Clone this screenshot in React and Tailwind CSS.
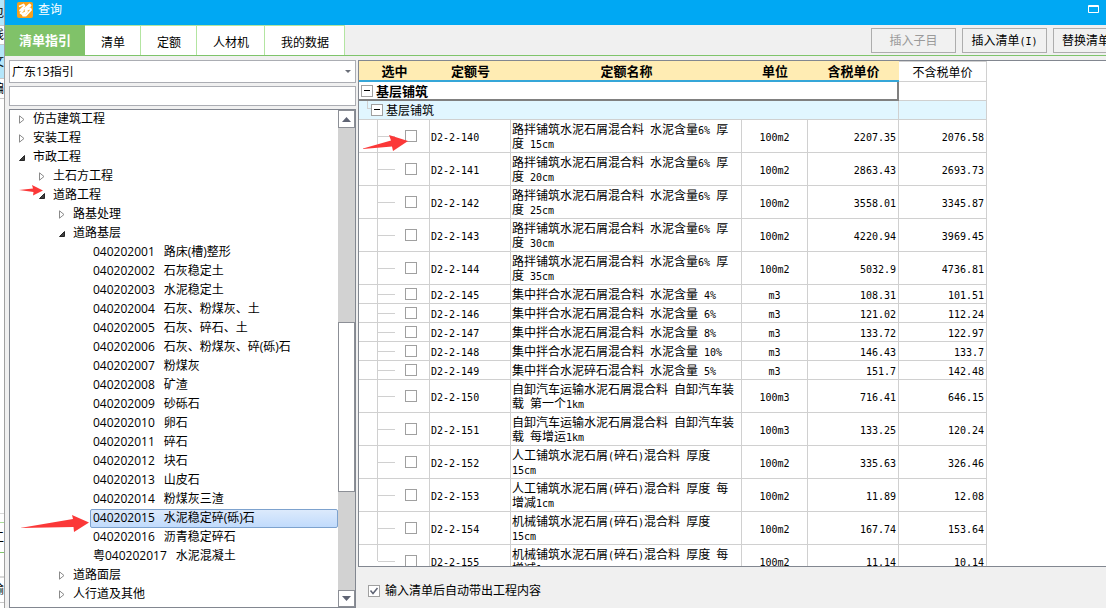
import { useState } from 'react';

const tabs = ['清单', '定额', '人材机', '我的数据'];

const tree = [
  { level: 0, label: '仿古建筑工程', state: 'closed' },
  { level: 0, label: '安装工程', state: 'closed' },
  { level: 0, label: '市政工程', state: 'open' },
  { level: 1, label: '土石方工程', state: 'closed' },
  { level: 1, label: '道路工程', state: 'open', arrow: 'short' },
  { level: 2, label: '路基处理', state: 'closed' },
  { level: 2, label: '道路基层', state: 'open' },
  { level: 3, code: '040202001', label: '路床(槽)整形' },
  { level: 3, code: '040202002', label: '石灰稳定土' },
  { level: 3, code: '040202003', label: '水泥稳定土' },
  { level: 3, code: '040202004', label: '石灰、粉煤灰、土' },
  { level: 3, code: '040202005', label: '石灰、碎石、土' },
  { level: 3, code: '040202006', label: '石灰、粉煤灰、碎(砾)石' },
  { level: 3, code: '040202007', label: '粉煤灰' },
  { level: 3, code: '040202008', label: '矿渣' },
  { level: 3, code: '040202009', label: '砂砾石' },
  { level: 3, code: '040202010', label: '卵石' },
  { level: 3, code: '040202011', label: '碎石' },
  { level: 3, code: '040202012', label: '块石' },
  { level: 3, code: '040202013', label: '山皮石' },
  { level: 3, code: '040202014', label: '粉煤灰三渣' },
  { level: 3, code: '040202015', label: '水泥稳定碎(砾)石', arrow: 'long' },
  { level: 3, code: '040202016', label: '沥青稳定碎石' },
  { level: 3, code: '粤040202017', label: '水泥混凝土' },
  { level: 2, label: '道路面层', state: 'closed' },
  { level: 2, label: '人行道及其他', state: 'closed' },
];

const indent = ['pl-0', 'pl-5', 'pl-10', 'pl-15'];

const rows = [
  { code: 'D2-2-140', name: ['路拌铺筑水泥石屑混合料 水泥含量6% 厚', '度 15cm'], unit: '100m2', price: '2207.35', net: '2076.58', arrow: true },
  { code: 'D2-2-141', name: ['路拌铺筑水泥石屑混合料 水泥含量6% 厚', '度 20cm'], unit: '100m2', price: '2863.43', net: '2693.73' },
  { code: 'D2-2-142', name: ['路拌铺筑水泥石屑混合料 水泥含量6% 厚', '度 25cm'], unit: '100m2', price: '3558.01', net: '3345.87' },
  { code: 'D2-2-143', name: ['路拌铺筑水泥石屑混合料 水泥含量6% 厚', '度 30cm'], unit: '100m2', price: '4220.94', net: '3969.45' },
  { code: 'D2-2-144', name: ['路拌铺筑水泥石屑混合料 水泥含量6% 厚', '度 35cm'], unit: '100m2', price: '5032.9', net: '4736.81' },
  { code: 'D2-2-145', name: ['集中拌合水泥石屑混合料 水泥含量 4%'], unit: 'm3', price: '108.31', net: '101.51' },
  { code: 'D2-2-146', name: ['集中拌合水泥石屑混合料 水泥含量 6%'], unit: 'm3', price: '121.02', net: '112.24' },
  { code: 'D2-2-147', name: ['集中拌合水泥石屑混合料 水泥含量 8%'], unit: 'm3', price: '133.72', net: '122.97' },
  { code: 'D2-2-148', name: ['集中拌合水泥石屑混合料 水泥含量 10%'], unit: 'm3', price: '146.43', net: '133.7' },
  { code: 'D2-2-149', name: ['集中拌合水泥碎石混合料 水泥含量 5%'], unit: 'm3', price: '151.7', net: '142.48' },
  { code: 'D2-2-150', name: ['自卸汽车运输水泥石屑混合料 自卸汽车装', '载 第一个1km'], unit: '100m3', price: '716.41', net: '646.15' },
  { code: 'D2-2-151', name: ['自卸汽车运输水泥石屑混合料 自卸汽车装', '载 每增运1km'], unit: '100m3', price: '133.25', net: '120.24' },
  { code: 'D2-2-152', name: ['人工铺筑水泥石屑(碎石)混合料 厚度', '15cm'], unit: '100m2', price: '335.63', net: '326.46' },
  { code: 'D2-2-153', name: ['人工铺筑水泥石屑(碎石)混合料 厚度 每', '增减1cm'], unit: '100m2', price: '11.89', net: '12.08' },
  { code: 'D2-2-154', name: ['机械铺筑水泥石屑(碎石)混合料 厚度', '15cm'], unit: '100m2', price: '167.74', net: '153.64' },
  { code: 'D2-2-155', name: ['机械铺筑水泥石屑(碎石)混合料 厚度 每', '增减1cm'], unit: '100m2', price: '11.14', net: '10.14' },
];

const mono = "font-['DejaVu_Sans_Mono','Noto_Sans_CJK_SC',monospace] text-[10px]";

// Latin runs are set in the mono face so they take half a CJK cell each
function Mixed({ text }) {
  return text.split(/([\x20-\x7e]+)/).map((part, i) =>
    i % 2 ? <span key={i} className={`${mono} whitespace-pre`}>{part}</span> : part
  );
}

function Logo() {
  return (
    <svg width="16" height="16" viewBox="0 0 16 16" aria-hidden="true">
      <rect width="16" height="16" rx="2" fill="#f9a01b" />
      <path d="M2 4.5 L6.5 2.5 L7.5 4 L3 8.5 L8 6.5 L12.5 2.5 L13.5 3.5 L8.5 8.5 L13.5 6.5 L14 8 L9 13.5 L6 13.5 L10 9.5 L5 12 L3.5 11 L6.5 8" fill="none" stroke="#fff" strokeWidth="1.8" strokeLinejoin="round" />
    </svg>
  );
}

function Twisty({ state }) {
  if (state === 'closed') {
    return (
      <svg width="6" height="9" viewBox="0 0 6 9" aria-hidden="true">
        <path d="M0.5 0.8 L5 4.5 L0.5 8.2 Z" fill="#fff" stroke="#8a8a8a" />
      </svg>
    );
  }
  if (state === 'open') {
    return (
      <svg width="6" height="6" viewBox="0 0 6 6" aria-hidden="true">
        <path d="M5.5 0.5 V5.5 H0.5 Z" fill="#404040" stroke="#262626" />
      </svg>
    );
  }
  return null;
}

function Minus() {
  return (
    <svg width="12" height="12" viewBox="0 0 12 12" className="shrink-0" aria-hidden="true">
      <rect x="0.5" y="0.5" width="11" height="11" fill="#fff" stroke="#a0a0a0" />
      <path d="M3 5.5 H9" stroke="#000" />
    </svg>
  );
}

function TreeRow({ item, selected, onSelect }) {
  return (
    <li className={`relative flex h-[19px] ${indent[item.level]}`}>
      <span className="flex w-5 shrink-0 items-center justify-center pl-1">
        <Twisty state={item.state} />
      </span>
      <button
        onClick={onSelect}
        className={`flex flex-1 items-center gap-[9px] rounded-xs border px-0.5 pb-0.5 text-left whitespace-nowrap ${
          selected ? 'border-[#7da2ce] bg-linear-to-b from-[#dceafc] to-[#c1dbfc]' : 'border-transparent'
        }`}
      >
        {item.code && <span>{item.code}</span>}
        <span>{item.label}</span>
      </button>
      {item.arrow === 'short' && (
        <svg className="absolute -top-1 left-2" width="26" height="14" viewBox="0 0 26 14" aria-hidden="true">
          <path d="M1 8 L15 6.5 L14 3 L25 8.5 L15 13.5 L15.5 10 Z" fill="#fb3838" />
        </svg>
      )}
      {item.arrow === 'long' && (
        <svg className="absolute top-1.5 left-2.5" width="70" height="18" viewBox="0 0 70 18" aria-hidden="true">
          <path d="M0 13 L53 4 L52 0 L69 7.5 L54 17 L53.5 12 Z" fill="#fb3838" />
        </svg>
      )}
    </li>
  );
}

function Tree() {
  const [selected, setSelected] = useState('水泥稳定碎(砾)石');

  return (
    <div className="flex min-h-0 flex-1 overflow-hidden border border-[#828790] bg-white">
      <ul className="min-w-0 flex-1 overflow-hidden">
        {tree.map((item) => (
          <TreeRow
            key={item.label}
            item={item}
            selected={item.label === selected}
            onSelect={() => setSelected(item.label)}
          />
        ))}
      </ul>
      <div className="flex w-[17px] flex-col bg-[#d2d2d2]">
        <button aria-label="向上" className="flex h-[18px] items-center justify-center border border-[#8c8f96] bg-white">
          <svg width="9" height="5" viewBox="0 0 9 5"><path d="M0 5 L4.5 0 L9 5 Z" fill="#5f6474" /></svg>
        </button>
        <div className="grow-[195]" />
        <div className="grow-[169] border border-[#8c8f96] bg-white" />
        <div className="grow-[98]" />
        <button aria-label="向下" className="flex h-[17px] items-center justify-center border border-[#8c8f96] bg-white">
          <svg width="9" height="5" viewBox="0 0 9 5"><path d="M0 0 L4.5 5 L9 0 Z" fill="#5f6474" /></svg>
        </button>
      </div>
    </div>
  );
}

function QuotaRow({ row, last }) {
  const height = row.name.length > 1 ? 'h-[33px]' : 'h-[19px]';
  const line = 'border-r border-b border-[#d0d0d0]';
  const value = `${line} ${mono} pt-1 pb-0`;

  return (
    <tr className={height}>
      <td className={`${line} p-0`}>
        <div className={`relative flex items-center ${row.name.length > 1 ? 'h-8' : 'h-[18px]'}`}>
          <span className={`ml-[18px] w-px bg-[#d0d0d0] ${last ? 'h-4 self-start' : 'h-full'}`} />
          <span className="h-px w-[17px] bg-[#d0d0d0]" />
          <input
            type="checkbox"
            aria-label={row.code}
            className="ml-2.5 size-3 appearance-none border border-[#a0a0a0] bg-white checked:bg-[#5f6474]"
          />
          {row.arrow && (
            <svg className="absolute top-3.5 left-1" width="46" height="18" viewBox="0 0 46 18" aria-hidden="true">
              <path d="M0 14.5 L28 6.5 L26 1 L45 7 L30 17 L29 12.5 L0 15 Z" fill="#fb3838" />
            </svg>
          )}
        </div>
      </td>
      <td className={`${value} pr-0 pl-px`}>{row.code}</td>
      <td className={`${line} pt-0.5 pr-0 pb-0 pl-px leading-[14px] whitespace-nowrap`}>
        {row.name.map((text) => (
          <div key={text} className="h-3.5"><Mixed text={text} /></div>
        ))}
      </td>
      <td className={`${value} px-0 text-center`}>{row.unit}</td>
      <td className={`${value} pr-0.5 pl-0 text-right`}>{row.price}</td>
      <td className={`${value} pr-0.5 pl-0 text-right`}>{row.net}</td>
    </tr>
  );
}

function QuotaTable() {
  const head = 'border-b-2 border-[#35a6d8] bg-[#ffecb3] px-0 pt-0.5 pb-0 text-[13px] font-bold';

  return (
    <div className="min-h-0 flex-1 overflow-hidden border-y border-l border-[#828790] bg-white">
      <table className="w-[628px] table-fixed border-separate border-spacing-0 leading-none">
        <colgroup>
          <col className="w-[71px]" />
          <col className="w-[81px]" />
          <col className="w-[231px]" />
          <col className="w-[66px]" />
          <col className="w-[91px]" />
          <col className="w-[88px]" />
        </colgroup>
        <thead>
          <tr className="h-[21px]">
            <th className={head}>选中</th>
            <th className={head}>定额号</th>
            <th className={head}>定额名称</th>
            <th className={head}>单位</th>
            <th className={head}>含税单价</th>
            <th className="border-t border-r border-b border-[#d0d0d0] px-0 pt-0.5 pb-0 font-normal">不含税单价</th>
          </tr>
        </thead>
        <tbody>
          <tr className="h-[19px]">
            <td colSpan={5} className="border-r-2 border-b-2 border-[#808080] p-0">
              <div className="flex items-center gap-[3px] pl-0.5 text-[13px] font-bold">
                <Minus />
                <span className="pt-0.5">基层铺筑</span>
              </div>
            </td>
            <td className="border-r border-b border-[#d0d0d0] p-0" />
          </tr>
          <tr className="h-[19px] bg-[#e1f6ff]">
            <td colSpan={5} className="border-r border-b border-[#d0d0d0] p-0">
              <div className="flex h-[18px] items-center pl-2">
                <span className="h-2 w-1 self-start border-b border-l border-[#d0d0d0]" />
                <Minus />
                <span className="pt-0.5 pl-[3px]">基层铺筑</span>
              </div>
            </td>
            <td className="border-r border-b border-[#d0d0d0] p-0" />
          </tr>
          {rows.map((row, i) => (
            <QuotaRow key={row.code} row={row} last={i === rows.length - 1} />
          ))}
        </tbody>
      </table>
    </div>
  );
}

// Sliver of the parent window that shows to the left of the dialog
function ParentEdge() {
  const cell = 'flex items-center justify-end overflow-hidden';

  return (
    <div className="flex w-[5px] shrink-0 flex-col border-r border-[#a0a0a0] bg-white" aria-hidden="true">
      <div className={`${cell} h-[26px] border-b border-[#c8c8c8] bg-[#b4e6fa]`}>包</div>
      <div className={`${cell} h-[19px] border-b border-[#c8c8c8]`}>线</div>
      <div className={`${cell} h-[34px] border-b border-[#c8c8c8] bg-[#b4e6fa]`}>文</div>
      <div className={`${cell} h-5 border-b border-[#c8c8c8]`}>编</div>
      <div className="flex-1 border-b border-[#d8d8d8]" />
      <div className="h-[9px] border-b border-[#a9dc98]" />
      <div className={`${cell} h-[30px] border-b border-[#7fc46b]`}>工</div>
      <div className="h-[25px] border-b-2 border-[#d8d8d8]" />
      <div className={`${cell} h-[25px] border-b border-[#c8c8c8]`}>输</div>
      <div className="h-[5px]" />
    </div>
  );
}

export default function App() {
  const toolButton = 'h-[25px] shrink-0 overflow-hidden border border-[#adadad] bg-[#f1f1f1] whitespace-nowrap';

  return (
    <div className="flex h-screen overflow-hidden bg-[#f0f0f0] font-['Open_Sans','Noto_Sans_CJK_SC',sans-serif] text-xs leading-none text-black">
      <ParentEdge />
      <div className="flex min-w-0 flex-1 flex-col">
        <header className="flex h-[25px] shrink-0 items-center bg-[#00a8f3] pr-[7px] pl-3 text-white">
          <div className="flex flex-1 items-center gap-[5px] pb-1.5">
            <Logo />
            <h1>查询</h1>
          </div>
          <button aria-label="最大化" className="pb-2">
            <svg width="11" height="8" viewBox="0 0 11 8">
              <path d="M0.5 0.5 H10.5 V7.5 H0.5 Z M0 1.5 H11" fill="none" stroke="#fff" />
            </svg>
          </button>
        </header>

        <div className="flex h-[31px] shrink-0 border-b border-[#7fc46b]">
          <nav className="flex">
            <button className="bg-[#80c269] px-3.5 text-[13px] font-bold text-white">清单指引</button>
            {tabs.map((tab) => (
              <button key={tab} className="border-t border-r border-[#b3e5a1] bg-white pt-1 pr-[15px] pl-4">
                {tab}
              </button>
            ))}
          </nav>
          <div className="flex flex-1 items-start justify-end gap-1.5 pt-[3px]">
            <button disabled className={`${toolButton} w-[85px] text-[#9a9a9a]`}>插入子目</button>
            <button className={`${toolButton} w-[85px]`}><Mixed text="插入清单(I)" /></button>
            <button className={`${toolButton} w-[53px] border-r-0 pl-2 text-left`}>替换清单</button>
          </div>
        </div>

        <div className="flex min-h-0 flex-1 gap-0.5 pt-1 pl-1">
          <aside className="flex w-[347px] shrink-0 flex-col gap-[3px]">
            <div className="relative">
              <select aria-label="指引" className="block h-[23px] w-full appearance-none border border-[#abadb3] bg-white px-0.5">
                <option>广东13指引</option>
              </select>
              <svg className="pointer-events-none absolute top-2.5 right-[5px]" width="6" height="3" viewBox="0 0 6 3" aria-hidden="true">
                <path d="M0 0 H6 L3 3 Z" fill="#6a6e78" />
              </svg>
            </div>
            <input type="text" aria-label="搜索" className="h-5 w-full border border-[#abadb3] bg-white px-1" />
            <Tree />
          </aside>

          <main className="flex min-w-0 flex-1 flex-col">
            <QuotaTable />
            <footer className="flex h-[41px] shrink-0 items-center pl-2.5">
              <label className="flex items-center gap-[5px] pt-1.5">
                <span className="relative size-3">
                  <input type="checkbox" defaultChecked className="peer block size-3 appearance-none border border-[#a0a0a0] bg-white" />
                  <svg className="pointer-events-none absolute inset-0 hidden peer-checked:block" width="12" height="12" viewBox="0 0 12 12" aria-hidden="true">
                    <path d="M2.5 5.5 L5 8.5 L9.5 3" fill="none" stroke="#5f6474" strokeWidth="1.5" />
                  </svg>
                </span>
                输入清单后自动带出工程内容
              </label>
            </footer>
          </main>
        </div>
      </div>
    </div>
  );
}
